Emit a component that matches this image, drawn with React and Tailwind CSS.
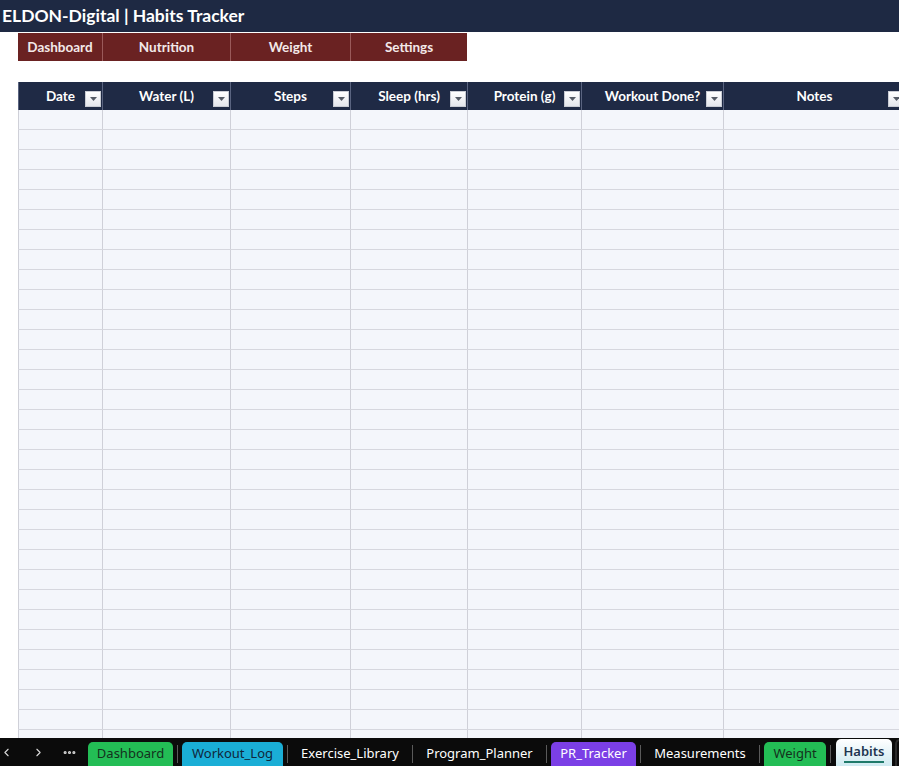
import { ChevronLeft, ChevronRight, MoreHorizontal } from "lucide-react";

const navButtons = [
  { label: "Dashboard", w: "w-[84px]" },
  { label: "Nutrition", w: "w-[128px]" },
  { label: "Weight", w: "w-[120px]" },
  { label: "Settings", w: "w-[117px]" },
];

const columns = [
  { label: "Date", w: "w-[85px]" },
  { label: "Water (L)", w: "w-[128px]" },
  { label: "Steps", w: "w-[120px]" },
  { label: "Sleep (hrs)", w: "w-[117px]" },
  { label: "Protein (g)", w: "w-[114px]" },
  { label: "Workout Done?", w: "w-[142px]" },
  { label: "Notes", w: "w-[182px]" },
];

const rows = Array.from({ length: 32 });

export default function App() {
  return (
    <div className="flex h-[766px] w-[899px] flex-col overflow-hidden bg-white font-['Lato',sans-serif]">
      {/* title bar */}
      <div className="flex h-[32px] shrink-0 items-center bg-[#1e2943] pl-[2px]">
        <h1 className="text-[17.5px] font-bold text-white">ELDON-Digital | Habits Tracker</h1>
      </div>

      {/* nav buttons */}
      <div className="mt-px flex h-[28px] shrink-0 pl-[18px]">
        {navButtons.map((b, i) => (
          <div
            key={b.label}
            className={`${b.w} flex items-center justify-center bg-[#6a2222] pt-[1px] text-[13.5px] font-bold text-[#f3e9e9] ${i > 0 ? "border-l border-[#9a5a5a]" : ""}`}
          >
            {b.label}
          </div>
        ))}
      </div>

      {/* table */}
      <div className="mt-[21px] flex-1 overflow-hidden pl-[18px]">
        <div className="flex h-[28px] w-max bg-[#1f2a45]">
          {columns.map((c, i) => (
            <HeaderCell key={c.label} col={c} first={i === 0} />
          ))}
        </div>
        {rows.map((_, r) => (
          <div key={r} className="flex h-[20px] w-max border-b border-[#d6d7de] bg-[#f4f6fb]">
            {columns.map((c, i) => (
              <div
                key={c.label}
                className={`${c.w} h-full border-r border-[#cfd0d8] ${i === 0 ? "border-l" : ""}`}
              />
            ))}
          </div>
        ))}
      </div>

      {/* sheet tabs */}
      <SheetTabs />
    </div>
  );
}

function HeaderCell({ col, first }) {
  return (
    <div
      className={`${col.w} relative flex items-center justify-center border-r border-[#5a6480] pt-[1px] ${first ? "border-l" : ""}`}
    >
      <span className="text-[13.5px] font-bold text-white">{col.label}</span>
      <div className="absolute right-[1px] bottom-[3px] flex h-[16px] w-[16px] items-center justify-center border border-[#c9ccd4] bg-gradient-to-b from-[#ffffff] to-[#e4e6ec]">
        <svg width="7" height="4" viewBox="0 0 7 4">
          <path d="M0 0 L7 0 L3.5 4 Z" fill="#555b66" />
        </svg>
      </div>
    </div>
  );
}

function Sep({ m = "mx-[4px]" }) {
  return <div className={`${m} mb-[3px] h-[18px] w-px shrink-0 self-end bg-[#5a5a5a]`} />;
}

function Tab({ label, w, cls }) {
  return (
    <div
      className={`${w} ${cls} flex h-[24px] shrink-0 items-center justify-center self-end rounded-t-[5px] text-[13px]`}
    >
      {label}
    </div>
  );
}

function SheetTabs() {
  return (
    <div className="flex h-[28px] shrink-0 items-end overflow-hidden bg-[#0b0b0b] font-['Noto_Sans',sans-serif]">
      <div className="flex h-full w-[88px] shrink-0 items-center text-[#d8d8d8]">
        <ChevronLeft size={13} className="ml-[0px]" />
        <ChevronRight size={13} className="ml-[19px]" />
        <MoreHorizontal size={15} strokeWidth={3} className="ml-[17px]" />
      </div>
      <Tab label="Dashboard" w="w-[85px]" cls="bg-[#23bd55] text-[#14301d]" />
      <Sep />
      <Tab label="Workout_Log" w="w-[101px]" cls="bg-[#1aaed6] text-[#10263a]" />
      <Sep />
      <Tab label="Exercise_Library" w="w-[116px]" cls="text-white" />
      <Sep />
      <Tab label="Program_Planner" w="w-[125px]" cls="text-white" />
      <Sep />
      <Tab label="PR_Tracker" w="w-[85px]" cls="bg-[#7b3fe6] text-white" />
      <Sep />
      <Tab label="Measurements" w="w-[110px]" cls="text-white" />
      <Sep />
      <Tab label="Weight" w="w-[62px]" cls="bg-[#23bd55] text-[#14301d]" />
      <Sep m="ml-[4px] mr-[5px]" />
      <div className="flex h-[27px] w-[56px] shrink-0 flex-col items-center justify-center self-end rounded-t-[5px] bg-gradient-to-b from-[#ffffff] to-[#cfeaf1] text-[13px] font-semibold text-[#1d3550]">
        <span className="leading-[18px]">Habits</span>
        <span className="mt-[1px] h-[2px] w-[40px] bg-[#1f7a6a]" />
      </div>
      <div className="ml-[3px] h-[27px] w-[10px] shrink-0 self-end rounded-tl-[5px] border-l-2 border-t-2 border-[#2a2a2a] bg-[#0b0b0b]" />
    </div>
  );
}
